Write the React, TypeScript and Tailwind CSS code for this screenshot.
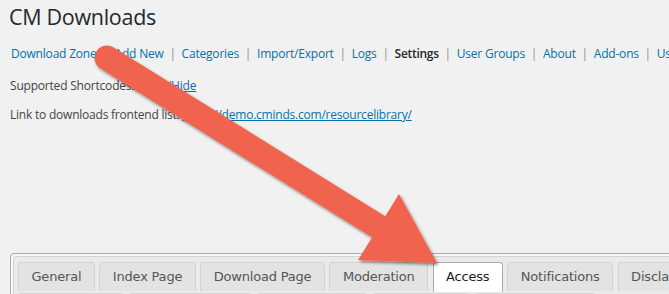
import React from 'react'

const navItems = [
  'Download Zone',
  'Add New',
  'Categories',
  'Import/Export',
  'Logs',
  'Settings',
  'User Groups',
  'About',
  'Add-ons',
  'User Guide',
]

const tabs = ['General', 'Index Page', 'Download Page', 'Moderation', 'Access', 'Notifications', 'Disclaimer', 'Labels']

const secondRowWidths = [106, 123, 110, 98, 120]

const Arrow = () => (
  <svg className="pointer-events-none absolute left-0 top-0" width="669" height="294" viewBox="0 0 669 294">
    <defs>
      <filter id="arrowShadow" x="-20%" y="-20%" width="140%" height="140%">
        <feDropShadow dx="1.5" dy="2" stdDeviation="1.6" floodColor="#000" floodOpacity="0.45" />
      </filter>
    </defs>
    <g filter="url(#arrowShadow)" fill="#f0634f" stroke="none">
      <line x1="107" y1="58" x2="379" y2="227" stroke="#f0634f" strokeWidth="25" strokeLinecap="round" />
      <polygon points="399,194 358,260 437,263" />
    </g>
  </svg>
)

const App = () => {
  return (
    <div className="relative h-[294px] w-[669px] overflow-hidden bg-[#f1f1f1] font-['Open_Sans',sans-serif] text-[#444]">
      <div className="pl-[10px] pt-[3px]">
        <h1 className="-ml-[1px] text-[21.5px] leading-[28px] tracking-[-0.3px] text-[#23282d] whitespace-nowrap">
          CM Downloads
        </h1>

        <div className="mt-[15px] ml-[1px] flex items-center gap-[5.8px] whitespace-nowrap text-[12px] leading-[16px] tracking-[-0.2px]">
          {navItems.map((item, index) => (
            <React.Fragment key={item}>
              {index > 0 && <span className="text-[#8f8f8f]">|</span>}
              {item === 'Settings' ? (
                <span className="font-semibold tracking-[-0.3px] text-[#23282d]">{item}</span>
              ) : (
                <span className="text-[#0073aa]">{item}</span>
              )}
            </React.Fragment>
          ))}
        </div>

        <p className="mt-[16px] whitespace-nowrap text-[12px] leading-[16px] tracking-[-0.2px]">
          Supported Shortcodes: <span className="text-[#0073aa] underline">Show/Hide</span>
        </p>

        <p className="mt-[13px] whitespace-nowrap text-[12px] leading-[16px] tracking-[-0.22px]">
          Link to downloads frontend list:{' '}
          <span className="text-[#0073aa] underline">https://demo.cminds.com/resourcelibrary/</span>
        </p>

        <div className="mt-[130px] w-[720px] rounded-[4px] border border-[#aaaaaa] bg-[#f8f8f8] p-[2px]">
          <div className="rounded-[3px] border border-[#d3d3d3] bg-[#eaeaea] pl-[4px] pt-[5px] font-['DejaVu_Sans',Verdana,sans-serif] text-[13px] tracking-[-0.2px]">
            <div className="flex gap-[4.5px] whitespace-nowrap">
              {tabs.map((tab) => {
                const active = tab === 'Access'
                return (
                  <div
                    key={tab}
                    className={
                      active
                        ? 'flex h-[30px] items-center rounded-t-[3px] border border-b-0 border-[#aaaaaa] bg-white px-[12.5px] pb-[1px] text-[#212121]'
                        : 'flex h-[29px] items-center rounded-t-[3px] border border-b-0 border-[#d3d3d3] bg-[#e3e3e3] px-[12.5px] text-[#555555]'
                    }
                  >
                    {tab}
                  </div>
                )
              })}
            </div>
            <div className="mt-[1px] flex gap-[5px]">
              {secondRowWidths.map((w, i) => (
                <div
                  key={i}
                  className="h-[29px] rounded-t-[3px] border border-b-0 border-[#d3d3d3] bg-[#e3e3e3]"
                  style={{ width: w }}
                />
              ))}
            </div>
          </div>
        </div>
      </div>
      <Arrow />
    </div>
  )
}

export default App
